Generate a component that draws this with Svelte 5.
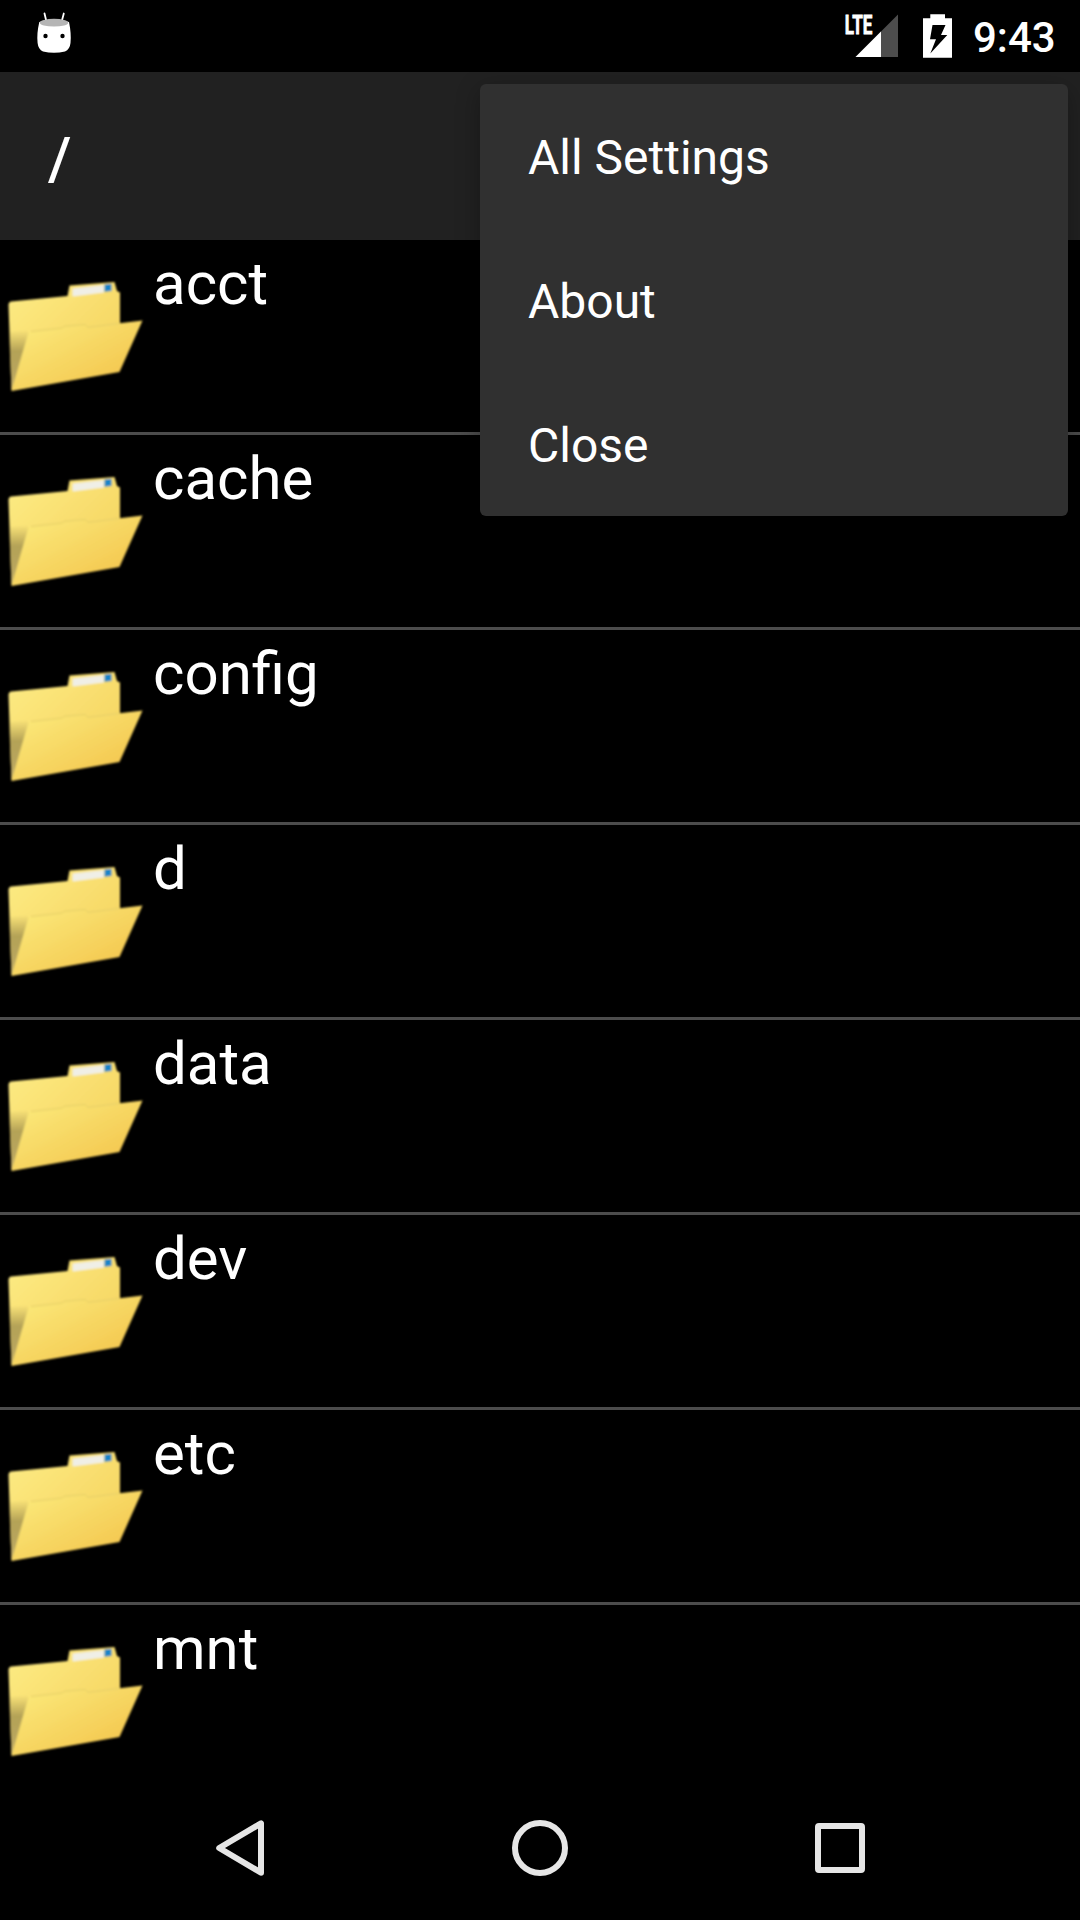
<script>
  const folders = ['acct', 'cache', 'config', 'd', 'data', 'dev', 'etc', 'mnt'];
  const menu = ['All Settings', 'About', 'Close'];
</script>

<div class="screen">
  <header class="status">
    <svg class="droid" width="40" height="48" viewBox="34 8 40 48">
      <path d="M44.5 13.5 46.3 21M63.8 13.5 61.8 21" stroke="#fff" stroke-width="1.8" stroke-linecap="round" />
      <path d="M39.3 22Q54 17 69 22Q71.500 34 70.500 43Q69.800 49.500 65 51.500Q54 54 43 51.500Q38.300 49.500 37.600 43Q36.500 34 39.300 22Z" fill="#fff" />
      <ellipse cx="54" cy="22.700" rx="14.300" ry="3.900" fill="#b5b5b5" />
      <circle cx="45.500" cy="36" r="2.200" />
      <circle cx="62.500" cy="36" r="2.200" />
    </svg>
    <div class="indicators">
      <svg width="60" height="52" viewBox="840 8 60 52">
        <text class="lte" x="844.800" y="33.500" textLength="27.500" lengthAdjust="spacingAndGlyphs">LTE</text>
        <path d="M898 14.500V57H855.500Z" fill="#4d4d4d" />
        <path d="M881 31.500V57H855.500Z" fill="#fff" />
      </svg>
      <svg class="battery" width="30" height="44" viewBox="923 14 30 44">
        <path d="M930.300 14.300H945V18.300H952V57.700H923V18.300H930.300Z" fill="#fff" />
        <path d="M932.500 25H945.500L941 35H947.300L930.300 53.500L936 39.300H930Z" fill="#000" />
      </svg>
      <span class="time">9:43</span>
    </div>
  </header>

  <div class="titlebar"><h1>/</h1></div>

  <svg class="defs" width="0" height="0">
    <defs>
      <linearGradient id="back" x1="0" y1="0" x2="1" y2="1">
        <stop offset="0" stop-color="#fdec85" />
        <stop offset="1" stop-color="#f4cf57" />
      </linearGradient>
      <linearGradient id="front" x1="0" y1="0" x2="1" y2="1">
        <stop offset="0.080" stop-color="#fbe97a" />
        <stop offset="0.900" stop-color="#f3c44b" />
      </linearGradient>
      <linearGradient id="shade" x1="0" y1="0" x2="0" y2="1">
        <stop offset="0" stop-color="#a39350" stop-opacity="0" />
        <stop offset="0.350" stop-color="#a39350" stop-opacity="0.800" />
        <stop offset="1" stop-color="#bfab66" />
      </linearGradient>
      <filter id="soft" x="-5%" y="-5%" width="110%" height="110%">
        <feGaussianBlur stdDeviation="1" />
      </filter>
      <g id="folder" filter="url(#soft)">
        <path d="M8.500 35Q8.500 32 11 31.500L67.500 26L69.500 15.500L114.500 12L117 21L120 22.500V90L11.500 120.500Z" fill="url(#back)" />
        <path d="M72.500 18.500L104 15V22.500L72.500 26.500Z" fill="#f0efe6" />
        <path d="M104.500 14.500L111.500 13.700V21L104.500 21.800Z" fill="#1684c9" />
        <path d="M9 62L27.500 60L30 70L11.500 120Z" fill="url(#shade)" />
        <path d="M11.500 121L28 64Q29 61.500 32 61L85 54.800L88 57L142.500 50.500L119.500 102Z" fill="url(#front)" />
        <path d="M31 61.500L62 58L64 56.300L85 54.500L88 57.300L119 53.500" fill="none" stroke="#e5cf68" stroke-width="1" />
      </g>
    </defs>
  </svg>

  <ul class="list">
    {#each folders as name}
      <li>
        <svg class="icon" width="150" height="130" viewBox="0 0 150 130"><use href="#folder" /></svg>
        <span>{name}</span>
      </li>
    {/each}
  </ul>

  <nav>
    <svg width="80" height="80" viewBox="200 1808 80 80"><path d="M261 1823.300V1872.700L219.200 1848Z" /></svg>
    <svg width="80" height="80" viewBox="500 1808 80 80"><circle cx="540" cy="1848" r="25" /></svg>
    <svg width="80" height="80" viewBox="800 1808 80 80"><rect x="818" y="1826" width="44" height="44" rx="1" /></svg>
  </nav>

  <div class="menu">
    {#each menu as item}
      <div class="item">{item}</div>
    {/each}
  </div>
</div>

<style>
  :global(body) {
    margin: 0;
    background: #000;
  }
  .screen {
    position: relative;
    display: flex;
    flex-direction: column;
    width: 1080px;
    height: 1920px;
    overflow: hidden;
    background: #000;
    color: #fff;
    font-family: Roboto, 'Liberation Sans', sans-serif;
  }
  svg {
    display: block;
    flex: none;
  }
  .defs {
    position: absolute;
  }
  .status {
    display: flex;
    justify-content: space-between;
    box-sizing: border-box;
    flex: none;
    height: 72px;
    padding: 8px 24px 0 34px;
  }
  .indicators {
    display: flex;
  }
  .lte {
    font-size: 26px;
    font-weight: 700;
    fill: #fff;
    stroke: #fff;
    stroke-width: 0.8px;
  }
  .battery {
    margin: 6px 20px 0 23px;
  }
  .time {
    width: 83px;
    padding-top: 5px;
    font-size: 42px;
    font-weight: 500;
    line-height: 50px;
    white-space: nowrap;
  }
  .titlebar {
    display: flex;
    align-items: center;
    box-sizing: border-box;
    flex: none;
    height: 168px;
    padding: 5px 0 0 48px;
    background: #212121;
  }
  h1 {
    margin: 0;
    font-size: 60px;
    font-weight: 500;
    line-height: 70px;
  }
  .list {
    flex: none;
    height: 1536px;
    margin: 0;
    padding: 0;
    overflow: hidden;
    list-style: none;
  }
  li {
    display: flex;
    height: 192px;
    border-bottom: 3px solid #4c4c4c;
  }
  .icon {
    margin-top: 30px;
  }
  li span {
    margin: 9px 0 0 3px;
    font-size: 60px;
    line-height: 70px;
  }
  nav {
    display: flex;
    align-items: center;
    justify-content: center;
    gap: 220px;
    height: 144px;
  }
  nav svg {
    fill: none;
    stroke: #e6e6e6;
    stroke-width: 6;
    stroke-linejoin: round;
  }
  .menu {
    position: absolute;
    top: 84px;
    left: 480px;
    width: 588px;
    border-radius: 6px;
    background: #303030;
    box-shadow: 0 6px 24px rgba(0, 0, 0, 0.3);
  }
  .item {
    box-sizing: border-box;
    height: 144px;
    padding: 2px 0 0 48px;
    font-size: 48px;
    line-height: 144px;
  }
</style>
